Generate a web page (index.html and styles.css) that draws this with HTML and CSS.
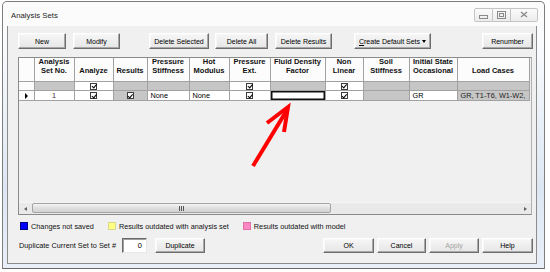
FILE: index.html
```html
<html>
<head>
<meta charset="UTF-8">
<title>Analysis Sets</title>
<link rel="stylesheet" href="styles.css">
</head>
<body>
<div class="window">
  <div class="titlebar">
    <span class="title">Analysis Sets</span>
    <div class="caption-btns">
      <span class="cap cap-min"><svg width="9" height="4" viewBox="0 0 9 4"><rect x="0.5" y="0.5" width="8" height="3" fill="none" stroke="#8a8a8a"/></svg></span>
      <span class="cap cap-max"><svg width="9" height="8" viewBox="0 0 9 8"><rect x="0.5" y="0.5" width="8" height="7" fill="none" stroke="#8a8a8a"/><rect x="2.5" y="2.5" width="4" height="3" fill="none" stroke="#8a8a8a"/></svg></span>
      <span class="cap cap-close"><svg width="8" height="7" viewBox="0 0 8 7"><path d="M1 1 L7 6 M7 1 L1 6" stroke="#8a8a8a" stroke-width="1.3"/></svg></span>
    </div>
  </div>

  <div class="client">
    <div class="toolbar">
      <button class="btn w48">New</button>
      <button class="btn w47">Modify</button>
      <button class="btn w60 group">Delete Selected</button>
      <button class="btn w53 near">Delete All</button>
      <button class="btn w57">Delete Results</button>
      <button class="btn w77 group-sm"><u>C</u>reate Default Sets <span class="drop"></span></button>
      <button class="btn w51 push">Renumber</button>
    </div>

    <div class="grid-box">
      <div class="grid-area">
        <table class="grid">
          <colgroup>
            <col class="c-head"><col class="c-no"><col class="c-an"><col class="c-res">
            <col class="c-ps"><col class="c-hm"><col class="c-pe"><col class="c-fd">
            <col class="c-nl"><col class="c-ss"><col class="c-is"><col class="c-lc">
          </colgroup>
          <tr class="hdr">
            <th></th>
            <th>Analysis<br>Set No.</th>
            <th>Analyze</th>
            <th>Results</th>
            <th>Pressure<br>Stiffness</th>
            <th>Hot<br>Modulus</th>
            <th>Pressure<br>Ext.</th>
            <th>Fluid Density<br>Factor</th>
            <th>Non<br>Linear</th>
            <th>Soil<br>Stiffness</th>
            <th>Initial State<br>Occasional</th>
            <th>Load Cases</th>
          </tr>
          <tr class="row">
            <td class="rh"></td>
            <td class="off"></td>
            <td class="mid"><span class="chk"></span></td>
            <td class="off"></td>
            <td class="off"></td>
            <td class="off"></td>
            <td class="mid"><span class="chk"></span></td>
            <td class="off"></td>
            <td class="mid"><span class="chk"></span></td>
            <td class="off"></td>
            <td class="off"></td>
            <td class="off"></td>
          </tr>
          <tr class="row">
            <td class="rh"><span class="marker"></span></td>
            <td class="mid num">1</td>
            <td class="mid"><span class="chk"></span></td>
            <td class="mid off"><span class="chk"></span></td>
            <td>None</td>
            <td>None</td>
            <td class="mid"><span class="chk"></span></td>
            <td class="cur"></td>
            <td class="mid"><span class="chk"></span></td>
            <td class="off"></td>
            <td>GR</td>
            <td class="off clip">GR, T1-T6, W1-W2,</td>
          </tr>
        </table>
      </div>
      <div class="hscroll">
        <span class="sb-arrow"><span class="tri-left"></span></span>
        <div class="sb-track">
          <div class="sb-thumb"><svg width="5" height="5" viewBox="0 0 5 5"><path d="M0.5 0 V5 M2.5 0 V5 M4.5 0 V5" stroke="#555" stroke-width="1"/></svg></div>
        </div>
        <span class="sb-arrow"><span class="tri-right"></span></span>
      </div>
    </div>

    <div class="legend">
      <span class="key"><span class="swatch blue"></span>Changes not saved</span>
      <span class="key"><span class="swatch yellow"></span>Results outdated with analysis set</span>
      <span class="key"><span class="swatch pink"></span>Results outdated with model</span>
    </div>

    <div class="footer">
      <span class="dup-label">Duplicate Current Set to Set #</span>
      <span class="field">0</span>
      <button class="btn btn-sm w50 dup">Duplicate</button>
      <button class="btn btn-sm w51 push">OK</button>
      <button class="btn btn-sm w49">Cancel</button>
      <button class="btn btn-sm w50 disabled">Apply</button>
      <button class="btn btn-sm w51">Help</button>
    </div>
  </div>
</div>

<!-- red callout arrow -->
<svg class="callout" width="550" height="272" viewBox="0 0 550 272">
  <path d="M253 166 L287 110" stroke="#ff0000" stroke-width="4" fill="none"/>
  <path d="M267 123 L288 107 L284 132" stroke="#ff0000" stroke-width="4" fill="none" stroke-linejoin="miter"/>
</svg>
</body>
</html>
```

FILE: styles.css
```css
body {
  margin: 0;
  background: #ffffff;
  font-family: "Liberation Sans", Arial, sans-serif;
  font-size: 7.5px;
  color: #000;
  position: relative;
  width: 550px;
  height: 272px;
  overflow: hidden;
}

.window {
  box-sizing: border-box;
  margin: 1px 0 0 2px;
  width: 543px;
  height: 268px;
  border: 1px solid #7d7d7d;
  border-bottom-color: #6a6a6a;
  border-radius: 5px 5px 0 0;
  background: linear-gradient(to bottom, #ffffff 0, #f7f9fc 20%, #dde7f3 70%, #e9eff8 100%);
  display: flex;
  flex-direction: column;
}

.titlebar {
  height: 24px;
  display: flex;
  align-items: center;
  padding: 0 6px 0 8px;
  background: #fbfbfb;
  border-radius: 5px 5px 0 0;
}

.title {
  font-size: 7.8px;
  color: #1e1e1e;
  margin-top: 2px;
}

.caption-btns {
  margin-left: auto;
  display: flex;
  margin-top: 1px;
}

.cap {
  height: 12px;
  display: flex;
  align-items: center;
  justify-content: center;
  border: 1px solid #c4c4c4;
  background: linear-gradient(to bottom, #fafafa, #ececec);
}

.cap-min {
  width: 17px;
  border-radius: 2px 0 0 2px;
}

.cap-min svg {
  margin-top: 4px;
}

.cap-max {
  width: 17px;
  border-left: none;
}

.cap-close {
  width: 26px;
  border-left: none;
  border-radius: 0 2px 2px 0;
}

.client {
  flex: 1;
  margin: 0 7px 4px 4px;
  border: 1px solid #8c8c8c;
  border-top: none;
  background: #f0f0f0;
  padding: 7px 3px 9px 10px;
  display: flex;
  flex-direction: column;
}

/* buttons */
.btn {
  box-sizing: border-box;
  height: 16px;
  padding: 0;
  font-family: "Liberation Sans", Arial, sans-serif;
  font-size: 7px;
  color: #000;
  background: linear-gradient(to bottom, #f6f6f6, #e6e6e6);
  border: 1px solid;
  border-color: #ffffff #6d6d6d #6d6d6d #ffffff;
  box-shadow: inset -1px -1px 0 #a8a8a8, inset 1px 1px 0 #f8f8f8;
  white-space: nowrap;
}

.btn-sm {
  height: 15px;
}

.disabled {
  color: #a4a4a4;
}

.w47 { width: 47px; }
.w48 { width: 48px; }
.w49 { width: 49px; }
.w50 { width: 50px; }
.w51 { width: 51px; }
.w53 { width: 53px; }
.w57 { width: 57px; }
.w60 { width: 60px; }
.w77 { width: 77px; }

.toolbar {
  display: flex;
  gap: 7px;
  height: 16px;
}

.toolbar .group {
  margin-left: 22px;
}

.toolbar .near {
  margin-left: -1px;
}

.toolbar .group-sm {
  margin-left: 15px;
}

.push {
  margin-left: auto;
}

.drop {
  display: inline-block;
  width: 0;
  height: 0;
  border-left: 2.5px solid transparent;
  border-right: 2.5px solid transparent;
  border-top: 3px solid #000;
  vertical-align: 1px;
}

/* grid */
.grid-box {
  margin-top: 8px;
  height: 158px;
  box-sizing: border-box;
  border: 1px solid #8a8a8a;
  border-right-color: #b0b0b0;
  margin-right: 1px;
  display: flex;
  flex-direction: column;
  background: #f0f0f0;
}

.grid-area {
  flex: 1;
  overflow: hidden;
}

.grid {
  border-collapse: collapse;
  table-layout: fixed;
  width: 510px;
}

.c-head { width: 15px; }
.c-no { width: 40px; }
.c-an { width: 39px; }
.c-res { width: 34px; }
.c-ps { width: 42px; }
.c-hm { width: 40px; }
.c-pe { width: 41px; }
.c-fd { width: 55px; }
.c-nl { width: 38px; }
.c-ss { width: 46px; }
.c-is { width: 48px; }
.c-lc { width: 72px; }

.grid th,
.grid td {
  border: 1px solid #a2a2a2;
  padding: 0;
  overflow: hidden;
  white-space: nowrap;
}

.grid tr:first-child th {
  border-top: none;
}

.grid th:first-child,
.grid td:first-child {
  border-left: none;
}

.hdr th {
  height: 23px;
  padding-bottom: 6px;
  vertical-align: bottom;
  font-weight: bold;
  font-size: 7.5px;
  line-height: 8.5px;
  text-align: center;
  background: #fcfcfc;
  color: #111;
}

.row td {
  height: 9px;
  line-height: 9px;
  background: #fff;
  padding-left: 3px;
  font-size: 7.3px;
}

.row td.mid {
  text-align: center;
  padding-left: 0;
}

.row td.off {
  background: #c6c6c6;
}

.row td.rh {
  background: #fcfcfc;
  padding-left: 0;
  text-align: center;
}

.row td.num {
  color: #4b1f3c;
}

.row td.clip {
  text-overflow: clip;
  color: #222;
}

.row td.cur {
  position: relative;
  box-shadow: inset 0 0 0 1.5px #111;
}

.row td.cur::after {
  content: "";
  position: absolute;
  right: -1px;
  bottom: -1px;
  width: 2px;
  height: 2px;
  background: #111;
}

.marker {
  display: inline-block;
  width: 0;
  height: 0;
  border-top: 3px solid transparent;
  border-bottom: 3px solid transparent;
  border-left: 3px solid #000;
  vertical-align: -1px;
}

.chk {
  display: inline-block;
  position: relative;
  box-sizing: border-box;
  width: 7px;
  height: 7px;
  border: 1px solid #3c3c3c;
  background: #fff;
  vertical-align: -1px;
}

.chk::after {
  content: "";
  position: absolute;
  left: 1.5px;
  top: -0.5px;
  width: 1.5px;
  height: 3.5px;
  border: solid #000;
  border-width: 0 1.2px 1.2px 0;
  transform: rotate(40deg);
}

/* horizontal scrollbar */
.hscroll {
  height: 11px;
  display: flex;
  background: #e9e9e9;
  border-top: 1px solid #f4f4f4;
}

.sb-arrow {
  width: 12px;
  display: flex;
  align-items: center;
  justify-content: center;
}

.tri-left,
.tri-right {
  width: 0;
  height: 0;
  border-top: 2.5px solid transparent;
  border-bottom: 2.5px solid transparent;
}

.tri-left {
  border-right: 3px solid #606060;
}

.tri-right {
  border-left: 3px solid #606060;
}

.sb-track {
  flex: 1;
  padding: 0 0 0 1px;
}

.sb-thumb {
  box-sizing: border-box;
  width: 299px;
  height: 10px;
  border: 1px solid #a4a4a4;
  border-radius: 2px;
  background: linear-gradient(to bottom, #f4f4f4, #dedede 55%, #d2d2d2);
  display: flex;
  align-items: center;
  justify-content: center;
}

/* legend */
.legend {
  margin-top: 6px;
  height: 10px;
  display: flex;
  align-items: center;
  gap: 14px;
  padding-left: 2px;
  font-size: 7.3px;
  color: #111;
}

.key {
  display: flex;
  align-items: center;
  gap: 3px;
}

.swatch {
  box-sizing: border-box;
  width: 8px;
  height: 8px;
  border: 1px solid #555;
}

.blue { background: #0000ff; border-color: #00008a; }
.yellow { background: #ffff80; border-color: #d8d890; }
.pink { background: #ff88c4; border-color: #e070a8; }

/* footer */
.footer {
  margin-top: 7px;
  height: 15px;
  display: flex;
  align-items: center;
  gap: 3px;
}

.dup-label {
  padding-left: 1px;
  font-size: 7.3px;
  color: #111;
  width: 99px;
  white-space: nowrap;
}

.field {
  box-sizing: border-box;
  width: 25px;
  height: 15px;
  margin-left: 1px;
  border: 1px solid;
  border-color: #6a6a6a #e8e8e8 #e8e8e8 #6a6a6a;
  box-shadow: inset 1px 1px 0 #a0a0a0;
  background: #fff;
  text-align: right;
  padding-right: 4px;
  line-height: 13px;
  font-size: 7.5px;
}

.footer .dup {
  margin-left: 5px;
}

.callout {
  position: absolute;
  left: 0;
  top: 0;
  pointer-events: none;
}
```
